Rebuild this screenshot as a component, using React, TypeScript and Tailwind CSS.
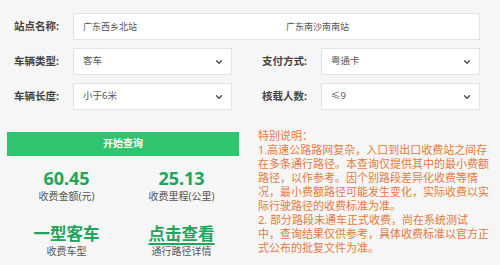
import React from 'react';
import { ChevronDown } from 'lucide-react';

const font = { fontFamily: '"Noto Sans", "Noto Sans CJK SC", sans-serif' };

const Select = ({ value, className }: { value: string; className?: string }) => (
  <div className={`h-[27px] bg-white border border-[#e4e4e4] flex items-center justify-between pl-[9px] pr-[7px] ${className ?? ''}`}>
    <span className="text-[9.5px] text-[#555]">{value}</span>
    <ChevronDown className="w-[10px] h-[10px] text-[#444]" strokeWidth={3} />
  </div>
);

const Label = ({ children, className }: { children: React.ReactNode; className?: string }) => (
  <span className={`text-[10.5px] font-bold text-[#444] shrink-0 ${className ?? ''}`}>{children}</span>
);

const Stat = ({ value, label, big, link }: { value: string; label: string; big?: boolean; link?: boolean }) => (
  <div className="flex flex-col items-center">
    <span
      className={`font-bold text-[#20a55b] ${big ? 'text-[16.5px] leading-[22px]' : 'text-[18px] leading-[24px]'} ${
        link ? 'underline decoration-2 underline-offset-[3px]' : ''
      }`}
    >
      {value}
    </span>
    <span className="text-[10px] leading-[12px] text-[#555]">{label}</span>
  </div>
);

const notes = [
  '特别说明：',
  '1.高速公路路网复杂，入口到出口收费站之间存',
  '在多条通行路径。本查询仅提供其中的最小费额',
  '路径，以作参考。因个别路段差异化收费等情',
  '况，最小费额路径可能发生变化，实际收费以实',
  '际行驶路径的收费标准为准。',
  '2. 部分路段未通车正式收费，尚在系统测试',
  '中，查询结果仅供参考，具体收费标准以官方正',
  '式公布的批复文件为准。',
];

export default function App() {
  return (
    <div className="w-[500px] h-[265px] bg-[#f6f6f6] overflow-hidden" style={font}>
      <div className="pl-[14px] pr-[20px] pt-[13px] flex flex-col gap-[8px]">
        <div className="flex items-center">
          <Label className="w-[59px]">站点名称:</Label>
          <div className="flex-1 h-[27px] bg-white border border-[#e4e4e4] flex items-center pl-[9px]">
            <span className="w-[203px] text-[9px] text-[#555]">广东西乡北站</span>
            <span className="text-[9px] text-[#555]">广东南沙南南站</span>
          </div>
        </div>
        <div className="flex items-center">
          <Label className="w-[59px]">车辆类型:</Label>
          <Select value="客车" className="w-[159px]" />
          <Label className="w-[89px] pl-[30px]">支付方式:</Label>
          <Select value="粤通卡" className="flex-1" />
        </div>
        <div className="flex items-center">
          <Label className="w-[59px]">车辆长度:</Label>
          <Select value="小于6米" className="w-[159px]" />
          <Label className="w-[89px] pl-[30px]">核载人数:</Label>
          <Select value="≤9" className="flex-1" />
        </div>
      </div>

      <div className="flex pl-[7px] pt-[19px] gap-[19px]">
        <div className="w-[232px] shrink-0">
          <button className="w-full h-[24px] bg-[#2fc56e] text-white text-[10px] font-bold">开始查询</button>
          <div className="grid grid-cols-2 mt-[10px] gap-y-[21px] pl-[2px]">
            <Stat value="60.45" label="收费金额(元)" />
            <Stat value="25.13" label="收费里程(公里)" />
            <Stat value="一型客车" label="收费车型" big />
            <Stat value="点击查看" label="通行路径详情" big link />
          </div>
        </div>
        <div className="flex-1 text-[11px] leading-[14px] text-[#e5793f]">
          {notes.map((l) => (
            <div key={l} className="whitespace-nowrap">
              {l}
            </div>
          ))}
        </div>
      </div>
    </div>
  );
}
